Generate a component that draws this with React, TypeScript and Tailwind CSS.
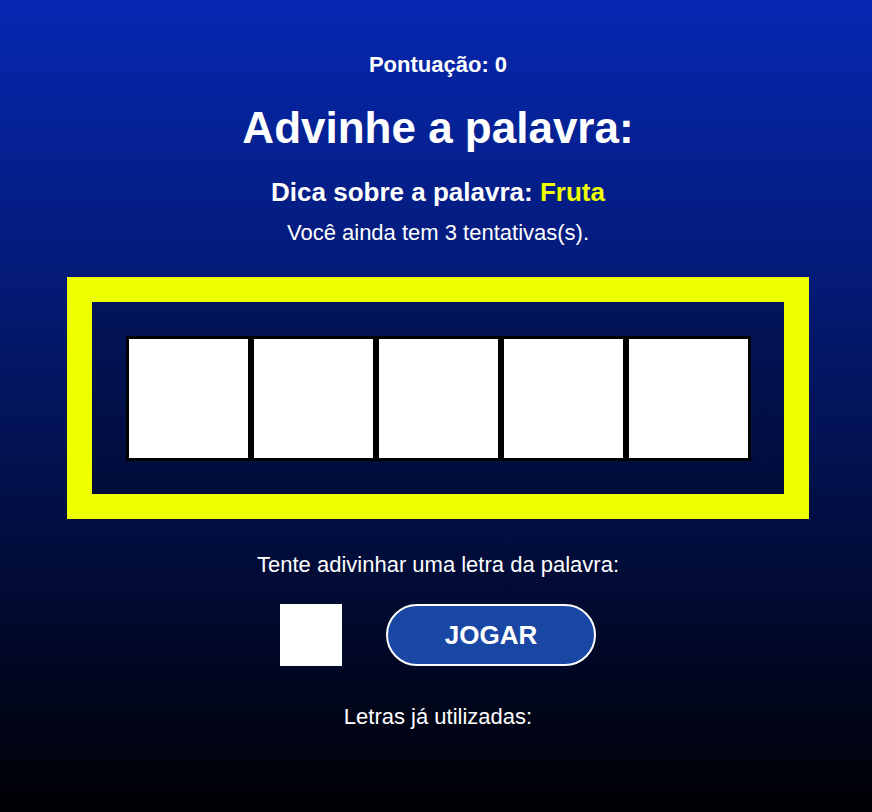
const App: React.FC = () => {
  const tiles = [0, 1, 2, 3, 4];

  return (
    <div className="min-h-screen bg-[linear-gradient(#0628b2,#000004)] pl-[4px] pt-[52px] pb-[40px] text-white font-['Liberation_Sans',Arial,sans-serif]">
      <div className="flex flex-col items-center">
        <p className="text-[22px] leading-[25px] font-bold">Pontuação: 0</p>
        <h1 className="mt-[26px] text-[44px] leading-[50px] font-bold">Advinhe a palavra:</h1>
        <h2 className="mt-[24px] text-[26px] leading-[30px] font-bold">
          Dica sobre a palavra: <span className="text-[#eeff00]">Fruta</span>
        </h2>
        <p className="mt-[13px] text-[22px] leading-[25px]">Você ainda tem 3 tentativas(s).</p>

        <div className="mt-[32px] w-[742px] h-[242px] border-[25px] border-[#eeff00] bg-black/20 flex items-center justify-center">
          <div className="flex">
            {tiles.map((t) => (
              <div key={t} className="w-[125px] h-[125px] bg-white border-[3px] border-black" />
            ))}
          </div>
        </div>

        <p className="mt-[33px] text-[22px] leading-[25px]">Tente adivinhar uma letra da palavra:</p>

        <div className="mt-[27px] flex items-center gap-[44px]">
          <input
            type="text"
            maxLength={1}
            className="w-[62px] h-[62px] bg-white text-black text-center text-[24px] outline-none"
          />
          <button className="w-[210px] h-[62px] rounded-full border-2 border-white bg-[#1a47a3] text-[26px] font-bold">
            JOGAR
          </button>
        </div>

        <p className="mt-[38px] text-[22px] leading-[25px]">Letras já utilizadas:</p>
      </div>
    </div>
  );
};

export default App;
